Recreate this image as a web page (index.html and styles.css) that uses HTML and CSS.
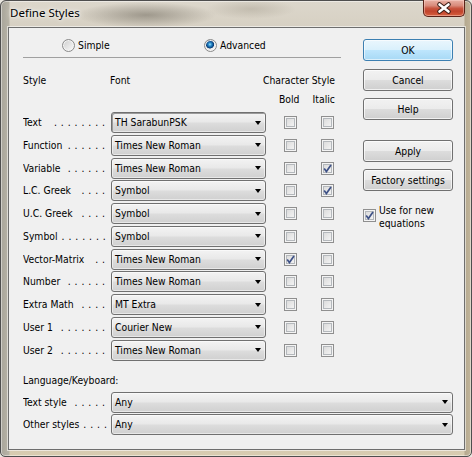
FILE: index.html
```html
<!DOCTYPE html>
<html>
<head>
<meta charset="utf-8">
<link rel="stylesheet" href="styles.css">
</head>
<body>
<div class="window">
  <div class="titlebar">
    <span class="title">Define Styles</span>
    <div class="close">
      <svg width="40" height="16" viewBox="0 0 40 16">
        <path d="M15.5 4.5 L24.5 11.5 M24.5 4.5 L15.5 11.5" stroke="#3b1d16" stroke-width="4.6" stroke-linecap="round"/>
        <path d="M15.5 4.5 L24.5 11.5 M24.5 4.5 L15.5 11.5" stroke="#ffffff" stroke-width="2.6" stroke-linecap="round"/>
      </svg>
    </div>
  </div>
  <div class="client">
    <div class="top">
      <div class="main">
        <div class="radios">
          <label class="ropt first"><span class="radio"></span><span>Simple</span></label>
          <label class="ropt"><span class="radio on"></span><span>Advanced</span></label>
        </div>
        <div class="sep"></div>
        <div class="hdr1">
          <span class="h-style">Style</span>
          <span class="h-font">Font</span>
          <span>Character Style</span>
        </div>
        <div class="hdr2">
          <span class="h-cb">Bold</span>
          <span class="h-cb">Italic</span>
        </div>
        <div class="rows">
          <div class="row"><span class="lbl">Text<span class="dots">. . . . . . . .</span></span><div class="select focus"><span class="val">TH SarabunPSK</span><span class="arrow"></span></div><span class="cb"></span><span class="cb"></span></div>
          <div class="row"><span class="lbl">Function<span class="dots">. . . . . .</span></span><div class="select"><span class="val">Times New Roman</span><span class="arrow"></span></div><span class="cb"></span><span class="cb"></span></div>
          <div class="row"><span class="lbl">Variable<span class="dots">. . . . . .</span></span><div class="select"><span class="val">Times New Roman</span><span class="arrow"></span></div><span class="cb"></span><span class="cb"><svg class="tick" width="11" height="11" viewBox="0 0 11 11"><path d="M2.2 5.6 L4.4 8.6 L9 2" fill="none" stroke="#3f5287" stroke-width="1.7"/></svg></span></div>
          <div class="row"><span class="lbl">L.C. Greek<span class="dots">. . . .</span></span><div class="select"><span class="val">Symbol</span><span class="arrow"></span></div><span class="cb"></span><span class="cb"><svg class="tick" width="11" height="11" viewBox="0 0 11 11"><path d="M2.2 5.6 L4.4 8.6 L9 2" fill="none" stroke="#3f5287" stroke-width="1.7"/></svg></span></div>
          <div class="row"><span class="lbl">U.C. Greek<span class="dots">. . . .</span></span><div class="select"><span class="val">Symbol</span><span class="arrow"></span></div><span class="cb"></span><span class="cb"></span></div>
          <div class="row"><span class="lbl">Symbol<span class="dots">. . . . . . .</span></span><div class="select"><span class="val">Symbol</span><span class="arrow"></span></div><span class="cb"></span><span class="cb"></span></div>
          <div class="row"><span class="lbl">Vector-Matrix<span class="dots">. .</span></span><div class="select"><span class="val">Times New Roman</span><span class="arrow"></span></div><span class="cb"><svg class="tick" width="11" height="11" viewBox="0 0 11 11"><path d="M2.2 5.6 L4.4 8.6 L9 2" fill="none" stroke="#3f5287" stroke-width="1.7"/></svg></span><span class="cb"></span></div>
          <div class="row"><span class="lbl">Number<span class="dots">. . . . . .</span></span><div class="select"><span class="val">Times New Roman</span><span class="arrow"></span></div><span class="cb"></span><span class="cb"></span></div>
          <div class="row"><span class="lbl">Extra Math<span class="dots">. . . .</span></span><div class="select"><span class="val">MT Extra</span><span class="arrow"></span></div><span class="cb"></span><span class="cb"></span></div>
          <div class="row"><span class="lbl">User 1<span class="dots">. . . . . . .</span></span><div class="select"><span class="val">Courier New</span><span class="arrow"></span></div><span class="cb"></span><span class="cb"></span></div>
          <div class="row"><span class="lbl">User 2<span class="dots">. . . . . . .</span></span><div class="select"><span class="val">Times New Roman</span><span class="arrow"></span></div><span class="cb"></span><span class="cb"></span></div>
        </div>
      </div>
      <div class="side">
        <div class="btn default">OK</div>
        <div class="btn b-cancel">Cancel</div>
        <div class="btn b-help">Help</div>
        <div class="btn b-apply">Apply</div>
        <div class="btn b-factory">Factory settings</div>
        <div class="usenew">
          <span class="cb"><svg class="tick" width="11" height="11" viewBox="0 0 11 11"><path d="M2.2 5.6 L4.4 8.6 L9 2" fill="none" stroke="#3f5287" stroke-width="1.7"/></svg></span>
          <span class="usetext">Use for new<br>equations</span>
        </div>
      </div>
    </div>
    <div class="lang">
      <div class="langhead">Language/Keyboard:</div>
      <div class="rows">
        <div class="row"><span class="lbl">Text style<span class="dots">. . . . .</span></span><div class="select wide"><span class="val">Any</span><span class="arrow"></span></div></div>
        <div class="row"><span class="lbl">Other styles<span class="dots">. . . .</span></span><div class="select wide"><span class="val">Any</span><span class="arrow"></span></div></div>
      </div>
    </div>
  </div>
</div>
</body>
</html>
```
FILE: styles.css
```css
html, body {
  margin: 0;
  padding: 0;
}
body {
  width: 472px;
  height: 457px;
  overflow: hidden;
  background: #e9e6df;
  font-family: "DejaVu Sans Condensed", "DejaVu Sans", sans-serif;
  font-stretch: condensed;
  font-size: 10.3px;
  color: #000;
}
.window {
  box-sizing: border-box;
  width: 472px;
  height: 457px;
  border: 1px solid #4e4e4e;
  border-radius: 6px 6px 5px 5px;
  display: flex;
  flex-direction: column;
  box-shadow: inset 0 0 0 1px rgba(255, 255, 255, 0.45);
  background:
    radial-gradient(ellipse 70px 13px at 145px 14px, rgba(110, 104, 92, 0.55), transparent),
    radial-gradient(ellipse 45px 10px at 250px 8px, rgba(150, 142, 126, 0.35), transparent),
    linear-gradient(to right, #a8a59b 0px, #b7b3a6 8px, transparent 9px, transparent 463px, #b5a98f 464px, #c6b99e 472px),
    linear-gradient(to bottom, #dcd7cc 0px, #d6cfc1 30px, #d4cab6 440px, #d8ccae 457px);
}
.titlebar {
  height: 26px;
  flex: none;
  display: flex;
  align-items: flex-start;
}
.title {
  font-family: "Noto Sans", "Open Sans", sans-serif;
  font-stretch: normal;
  font-size: 11.5px;
  line-height: 15px;
  margin: 3.5px 0 0 9px;
  text-shadow: 0 0 6px rgba(255, 255, 255, 0.95), 0 0 3px rgba(255, 255, 255, 0.9);
}
.close {
  margin: -1px 6px 0 auto;
  box-sizing: border-box;
  width: 42px;
  height: 17px;
  border: 1px solid #5a2218;
  border-top: none;
  border-radius: 0 0 5px 5px;
  background: linear-gradient(#e9b2a6 0%, #d98b7b 35%, #c8553f 52%, #c0432c 70%, #d7603f 100%);
  box-shadow: inset 0 0 0 1px rgba(255, 220, 210, 0.45);
  display: flex;
  align-items: center;
  justify-content: center;
}
.close svg {
  display: block;
}
.client {
  flex: 1;
  margin: 0 6px 6px 7px;
  border: 1px solid #6e6e6e;
  box-shadow: 0 0 0 1px rgba(255, 255, 255, 0.55);
  background: #f0f0f0;
  padding: 0 11px 0 14px;
  display: flex;
  flex-direction: column;
  line-height: 13px;
}
.top {
  display: flex;
}
.main {
  width: 318px;
  flex: none;
}
.radios {
  margin-top: 11px;
  height: 13px;
  padding-left: 39px;
  display: flex;
  align-items: center;
}
.ropt {
  display: flex;
  align-items: center;
  gap: 3px;
}
.ropt.first {
  width: 142px;
}
.radio {
  box-sizing: border-box;
  width: 13px;
  height: 13px;
  border-radius: 50%;
  border: 1px solid #8a8a8a;
  background: linear-gradient(135deg, #cdcdcd, #fbfbfb);
  box-shadow: inset 0 0 0 1px #f4f4f4;
}
.radio.on {
  background:
    radial-gradient(circle at 45% 40%, #a8e6fb 0, #3598d4 1.4px, #0e5597 3px, #0a3b70 3.8px, rgba(10, 59, 112, 0) 4.4px),
    linear-gradient(135deg, #cdcdcd, #fbfbfb);
}
.sep {
  margin-top: 5px;
  height: 1px;
  background: #a0a0a0;
}
.hdr1 {
  margin-top: 16px;
  display: flex;
}
.h-style {
  width: 87px;
}
.h-font {
  width: 153px;
}
.hdr2 {
  margin-top: 6px;
  padding-left: 249px;
  display: flex;
}
.h-cb {
  width: 37px;
  text-align: center;
}
.rows {
  margin-top: 6px;
  display: flex;
  flex-direction: column;
  gap: 1.75px;
}
.row {
  height: 21px;
  display: flex;
  align-items: center;
}
.lbl {
  box-sizing: border-box;
  width: 88px;
  padding-right: 6px;
  display: flex;
  white-space: nowrap;
  overflow: hidden;
}
.dots {
  margin-left: auto;
  padding-left: 4px;
  word-spacing: 1px;
}
.select {
  box-sizing: border-box;
  width: 155px;
  height: 21px;
  border: 1px solid #707070;
  border-radius: 3px;
  background: linear-gradient(#f3f3f3, #e9e9e9 45%, #dcdcdc 55%, #d0d0d0);
  box-shadow: inset 0 0 0 1px rgba(255, 255, 255, 0.5);
  display: flex;
  align-items: center;
  padding-left: 3px;
}
.select.focus {
  box-shadow: inset 1px 1px 0 #9a9a9a, inset 0 0 0 1px rgba(255, 255, 255, 0.5);
}
.select.wide {
  width: 342px;
}
.val {
  white-space: nowrap;
}
.arrow {
  margin-left: auto;
  margin-right: 4px;
  width: 0;
  height: 0;
  border-left: 3.5px solid transparent;
  border-right: 3.5px solid transparent;
  border-top: 4px solid #000;
}
.cb {
  box-sizing: border-box;
  width: 13px;
  height: 13px;
  flex: none;
  border: 1px solid #8f8f8f;
  background: linear-gradient(135deg, #d6d6d6, #f9f9f9);
  box-shadow: inset 0 0 0 1px #f4f4f4, inset 0 0 0 2px #b4b8bc;
  display: flex;
  align-items: center;
  justify-content: center;
}
.row .cb {
  margin-left: 18px;
}
.row .cb + .cb {
  margin-left: 24px;
}
.tick {
  display: block;
}
.side {
  width: 90px;
  margin-left: 22px;
  padding-top: 11px;
  display: flex;
  flex-direction: column;
}
.btn {
  box-sizing: border-box;
  height: 22px;
  border: 1px solid #707070;
  border-radius: 3px;
  background: linear-gradient(#f2f2f2, #ebebeb 50%, #dddddd 50%, #cfcfcf);
  box-shadow: inset 0 0 0 1px rgba(255, 255, 255, 0.7);
  display: flex;
  align-items: center;
  justify-content: center;
  white-space: nowrap;
}
.btn.default {
  border-color: #3c7fb1;
  background: linear-gradient(#eaf6fd, #d9f0fc 50%, #bee6fd 50%, #a7d9f5);
  box-shadow: inset 0 0 0 1px rgba(255, 255, 255, 0.6);
}
.b-cancel {
  margin-top: 8px;
}
.b-help {
  margin-top: 7px;
}
.b-apply {
  margin-top: 20px;
}
.b-factory {
  margin-top: 7px;
}
.usenew {
  margin-top: 13px;
  display: flex;
  align-items: flex-start;
}
.usenew .cb {
  margin-top: 5px;
}
.usetext {
  margin-left: 3px;
  line-height: 12.5px;
}
.lang {
  margin-top: 13px;
}
.lang .rows {
  margin-top: 5px;
}
```
